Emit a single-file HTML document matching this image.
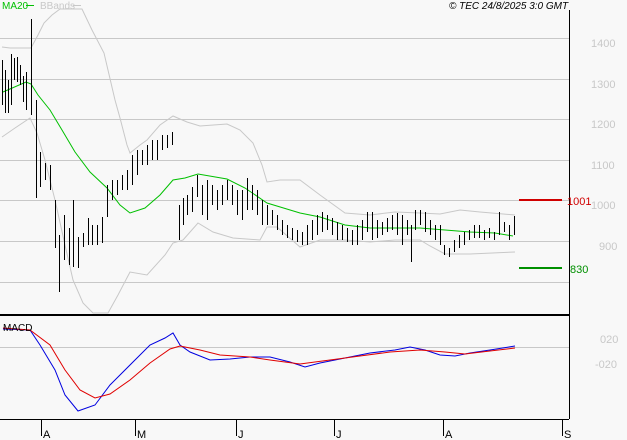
<!DOCTYPE html>
<html><head><meta charset="utf-8"><style>
html,body{margin:0;padding:0;background:#f8f8f8;}
svg{display:block;font-family:"Liberation Sans",sans-serif;}
</style></head><body>
<svg width="627" height="440" viewBox="0 0 627 440" xmlns="http://www.w3.org/2000/svg">
<rect width="627" height="440" fill="#f8f8f8"/>
<g stroke="#c8c8c8" stroke-width="1">
<line x1="0" y1="38.5" x2="569" y2="38.5"/>
<line x1="0" y1="79.5" x2="569" y2="79.5"/>
<line x1="0" y1="119.5" x2="569" y2="119.5"/>
<line x1="0" y1="160.5" x2="569" y2="160.5"/>
<line x1="0" y1="200.5" x2="569" y2="200.5"/>
<line x1="0" y1="241.5" x2="569" y2="241.5"/>
<line x1="0" y1="282.5" x2="569" y2="282.5"/>
<line x1="0" y1="347.5" x2="569" y2="347.5"/>
</g>
<g fill="none" stroke="#c8c8c8" stroke-width="1">
<polyline points="2,47 10,48 31,48 38,35 44,23 52,15 60,9 82,9 92,30 104,53 115,100 120,118 127,145 130,153 140,145 147,140 160,125 173,116 187,122 200,126 227,124 240,130 253,143 262,165 267,182 280,180 300,180 320,195 345,213 370,215 395,212 420,213 440,214 460,210 480,212 515,215"/>
<polyline points="2,137 15,128 30,118 37,133 45,160 55,200 65,245 73,280 83,303 93,313 108,313 118,295 130,272 147,275 165,255 173,243 183,240 198,223 213,232 233,238 260,240 267,227 277,227 300,247 320,240 345,240 370,242 395,240 420,240 430,246 445,254 470,254 515,252"/>
</g>
<polyline fill="none" stroke="#00c000" stroke-width="1" points="3,92 26,82 31,84 38,95 50,110 62,130 75,152 90,172 107,188 120,205 130,213 145,208 160,195 173,180 185,178 198,174 227,179 245,188 267,203 300,213 320,217 345,225 370,228 395,228 420,228 445,230 470,232 495,233 513,236"/>
<path transform="translate(0.5,0)" stroke="#000" stroke-width="1" shape-rendering="crispEdges" fill="none" d="M2 60V105M5 70V113M8 80V113M11 54V105M14 58V80M17 57V82M20 65V85M23 76V102M26 72V110M31 19V115M36 100V198M40 152V187M45 163V180M50 165V190M55 200V248M59 235V292M64 215V260M69 228V265M73 200V267M78 237V268M83 233V247M88 218V245M92 225V245M97 225V245M102 217V243M107 185V217M112 180V200M117 180V195M122 175V190M127 170V190M132 155V185M137 150V175M142 150V165M147 145V165M152 140V160M157 140V160M162 135V150M167 135V148M172 132V145M179 205V240M183 198V225M187 195V215M192 187V212M197 175V197M202 185V215M207 180V220M212 185V205M217 190V210M222 185V205M227 180V200M232 185V205M237 190V215M242 190V220M247 178V210M252 185V210M257 190V215M262 200V225M267 205V225M272 210V225M277 215V230M282 220V235M287 225V238M292 228V240M297 230V242M302 232V245M307 225V245M312 220V240M317 215V235M322 212V232M327 215V230M332 218V235M337 222V240M342 225V240M347 228V242M352 230V245M357 225V245M362 220V240M367 212V232M372 212V240M377 220V238M382 222V235M387 218V232M392 215V230M397 213V235M402 215V245M407 220V235M411 225V262M415 210V230M420 210V225M425 212V232M430 220V235M435 225V240M440 225V245M444 245V255M449 248V257M454 240V252M459 235V248M464 232V245M469 230V240M474 225V238M479 225V238M484 230V240M489 228V238M494 232V240M499 212V235M504 222V232M509 225V240M514 216V235"/>
<line x1="519" y1="200" x2="562" y2="200" stroke="#d00000" stroke-width="2"/>
<line x1="519" y1="268" x2="562" y2="268" stroke="#009000" stroke-width="2"/>
<polyline fill="none" stroke="#0000e0" stroke-width="1" points="3,329 30,330 40,345 55,370 65,395 78,411 95,405 110,385 135,360 150,345 165,338 173,333 180,345 190,352 210,360 230,359 250,357 270,357 290,362 305,367 320,363 345,358 370,353 395,350 410,347 425,350 440,355 455,356 470,353 490,350 515,346"/>
<polyline fill="none" stroke="#e00000" stroke-width="1" points="3,328 30,330 50,345 65,370 80,390 95,398 110,394 130,380 150,363 170,349 180,346 200,350 220,355 250,357 270,360 300,364 330,360 360,356 390,352 420,350 445,352 465,354 490,351 515,348"/>
<line x1="0" y1="315" x2="569" y2="315" stroke="#000" stroke-width="2"/>
<line x1="569.5" y1="10" x2="569.5" y2="419" stroke="#000" stroke-width="1"/>
<line x1="0" y1="419.5" x2="569" y2="419.5" stroke="#000" stroke-width="1"/>
<g stroke="#000" stroke-width="1">
<line x1="41.5" y1="419" x2="41.5" y2="436"/>
<line x1="135.5" y1="419" x2="135.5" y2="436"/>
<line x1="236.5" y1="419" x2="236.5" y2="436"/>
<line x1="334.5" y1="419" x2="334.5" y2="436"/>
<line x1="443.5" y1="419" x2="443.5" y2="436"/>
<line x1="562.5" y1="419" x2="562.5" y2="436"/>
</g>
<g font-size="11" fill="#000">
<text x="43" y="438">A</text><text x="137" y="438">M</text><text x="238" y="438">J</text>
<text x="336" y="438">J</text><text x="445" y="438">A</text><text x="564" y="438">S</text>
</g>
<g font-size="11" fill="#c8c8c8">
<text x="591" y="47">1400</text><text x="591" y="88">1300</text><text x="591" y="128">1200</text>
<text x="591" y="169">1100</text><text x="591" y="209">1000</text><text x="599" y="250">900</text>
<text x="600" y="343">020</text><text x="595" y="368">-020</text>
</g>
<text x="567" y="205" font-size="11" fill="#d00000">1001</text>
<text x="570" y="273" font-size="11" fill="#009000">830</text>
<text x="2" y="9" font-size="10" fill="#00c000">MA20</text>
<line x1="26" y1="5.5" x2="34" y2="5.5" stroke="#00c000"/>
<text x="40" y="9" font-size="10" fill="#c8c8c8">BBands</text>
<line x1="73" y1="5.5" x2="81" y2="5.5" stroke="#c8c8c8"/>
<text x="449" y="9" font-size="10" font-style="italic" fill="#000">© TEC 24/8/2025 3:0 GMT</text>
<text x="3" y="331" font-size="10" fill="#000">MACD</text>
</svg>
</body></html>
